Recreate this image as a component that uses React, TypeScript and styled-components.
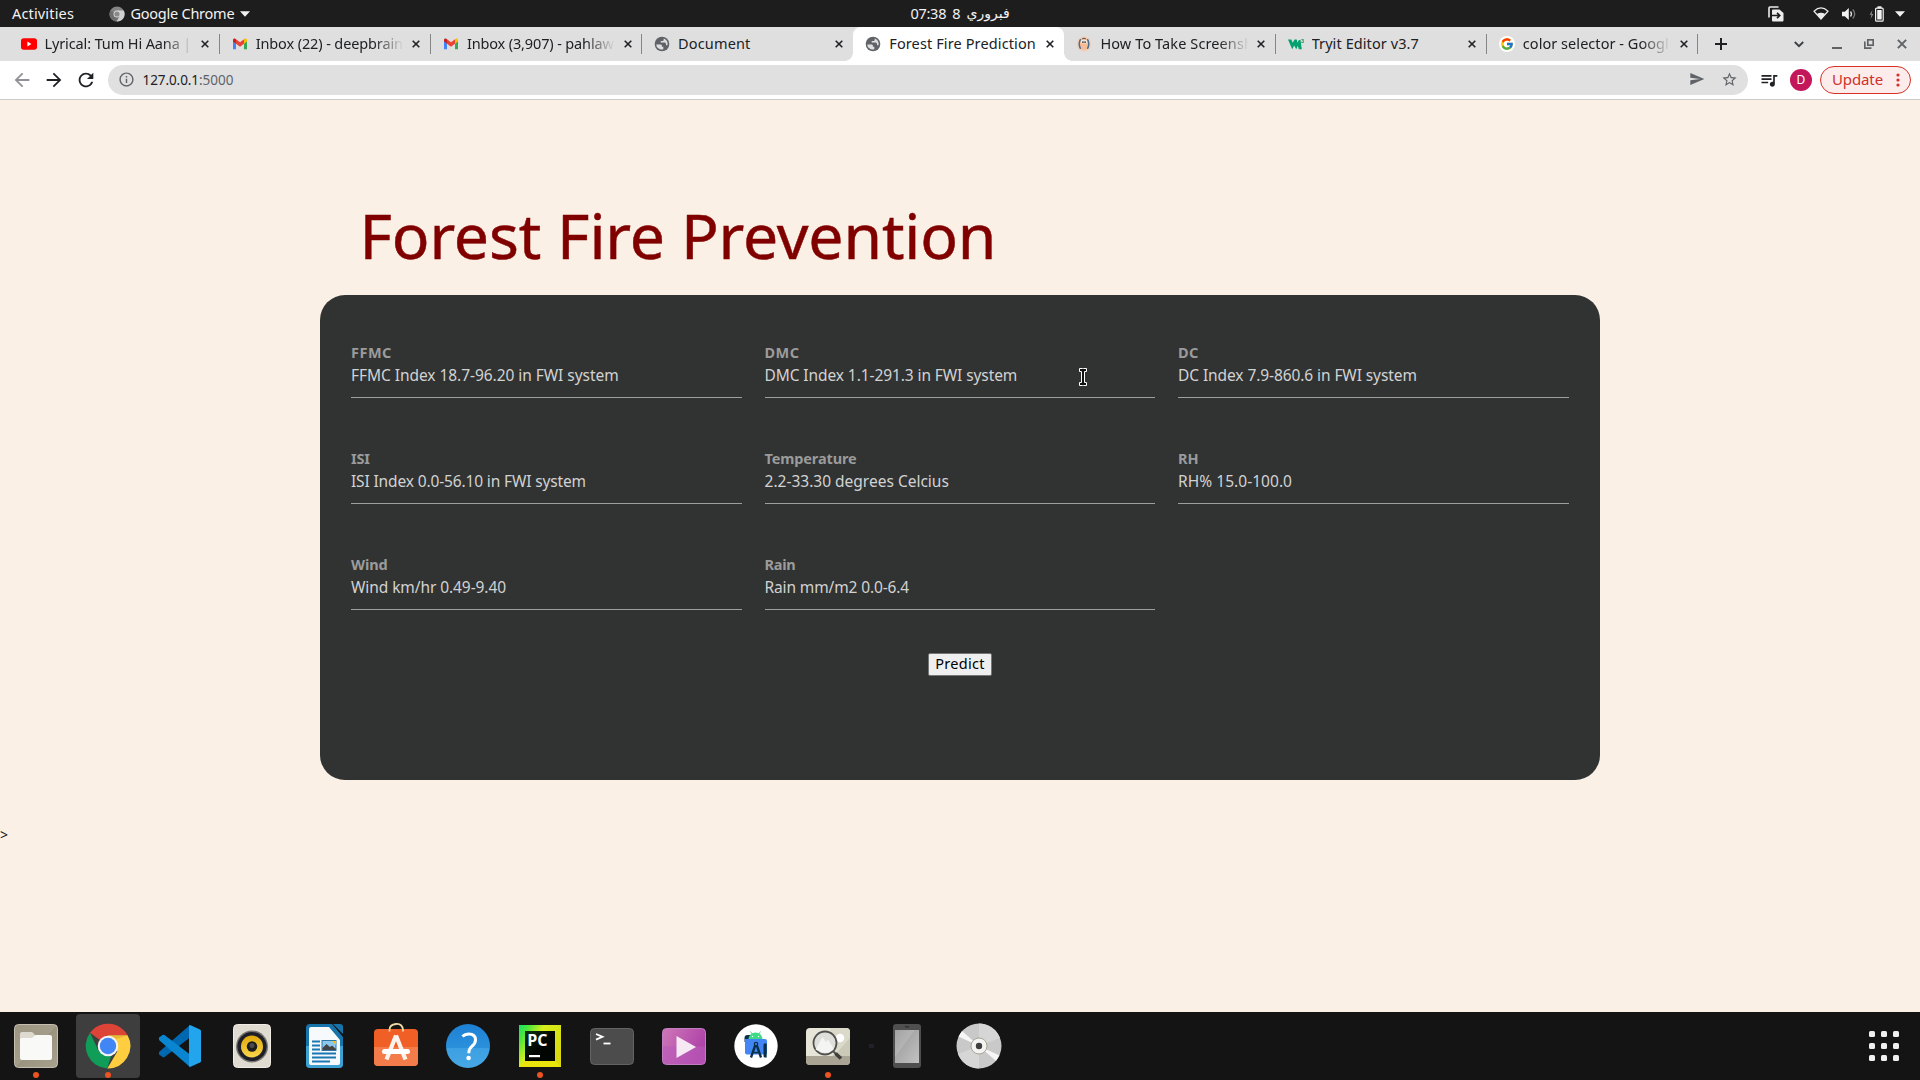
import React from 'react';
import styled, { createGlobalStyle } from 'styled-components';
import {
  MdArrowBack,
  MdArrowForward,
  MdRefresh,
  MdInfoOutline,
  MdSend,
  MdStarOutline,
  MdQueueMusic,
} from 'react-icons/md';
import { FcGoogle } from 'react-icons/fc';

const Global = createGlobalStyle`
  * { box-sizing: border-box; }
  html, body { margin: 0; padding: 0; overflow: hidden; }
  body { font-family: "Noto Sans", "Open Sans", sans-serif; }
  svg { display: block; flex: none; }
`;

const Desktop = styled.div`
  position: relative;
  width: 1920px;
  height: 1080px;
  display: flex;
  flex-direction: column;
  overflow: hidden;
`;

/* ---------- shared text ---------- */

const Text = styled.span<{ $track?: number }>`
  letter-spacing: ${(p) => p.$track ?? 0}px;
  white-space: pre;
`;

/* ---------- system bar ---------- */

const SystemBar = styled.header`
  height: 27px;
  flex: none;
  display: grid;
  grid-template-columns: 1fr auto 1fr;
  background: #1d1d1d;
  color: #f2f2f2;
  font-size: 14.5px;
  line-height: 27px;
`;

const SystemLeft = styled.div`
  display: flex;
  align-items: center;
  padding-left: 12px;
`;

const AppMenu = styled.div`
  display: flex;
  align-items: center;
  margin-left: 35px;
  gap: 5.5px;
`;

const Clock = styled.div`
  display: flex;
  align-items: center;
  gap: 6px;
`;

const ArabicText = styled.span`
  font-family: "DejaVu Sans", sans-serif;
  font-size: 14px;
`;

const Tray = styled.div`
  display: flex;
  align-items: center;
  justify-content: flex-end;
  padding-right: 15px;
`;

const TrayItem = styled.div<{ $before: number }>`
  margin-left: ${(p) => p.$before}px;
`;

/* ---------- browser tabs ---------- */

const TabStrip = styled.div`
  height: 34px;
  flex: none;
  display: flex;
  align-items: center;
  padding-left: 8.5px;
  background: #dfdfdf;
`;

const TabItem = styled.div<{ $active?: boolean; $divider?: boolean }>`
  position: relative;
  width: 211.2px;
  height: 34px;
  flex: none;
  display: flex;
  align-items: center;
  padding: 0 6px 0 12px;
  background: ${(p) => (p.$active ? '#fff' : 'transparent')};
  border-radius: 8px 8px 0 0;

  &::after {
    content: '';
    display: ${(p) => (p.$divider ? 'block' : 'none')};
    position: absolute;
    right: 0;
    top: 7px;
    width: 1px;
    height: 20px;
    background: #858585;
  }
`;

const Flare = styled.i<{ $side: 'left' | 'right' }>`
  position: absolute;
  bottom: 0;
  ${(p) => p.$side}: -8px;
  width: 8px;
  height: 8px;
  background: radial-gradient(
    circle at ${(p) => (p.$side === 'left' ? '0 0' : '100% 0')},
    transparent 7.5px,
    #fff 8px
  );
`;

const TabIcon = styled.div`
  width: 16px;
  height: 16px;
  flex: none;
  margin-right: 8px;
`;

const TabTitle = styled.div<{ $fade?: boolean; $track: number }>`
  flex: 1;
  min-width: 0;
  overflow: hidden;
  white-space: pre;
  color: #202124;
  font-size: 14.5px;
  line-height: 32px;
  height: 34px;
  letter-spacing: ${(p) => p.$track}px;
  mask-image: ${(p) =>
    p.$fade ? 'linear-gradient(to right, #000 calc(100% - 30px), transparent 100%)' : 'none'};
`;

const TabClose = styled.div`
  width: 17px;
  flex: none;
  display: flex;
  justify-content: center;
  margin-left: 4px;
`;

const NewTab = styled.div`
  margin-left: 17px;
  flex: 1;
`;

const WindowButtons = styled.div`
  display: flex;
  align-items: center;
  padding-right: 13px;
`;

/* ---------- toolbar ---------- */

const Toolbar = styled.div`
  height: 39px;
  flex: none;
  display: flex;
  align-items: center;
  padding: 0 9px 1px 11px;
  background: #fff;
  border-bottom: 1px solid #cbcbcb;
`;

const NavButtons = styled.div`
  display: flex;
  gap: 10px;
  color: #202124;
`;

const Omnibox = styled.div`
  flex: 1;
  height: 30px;
  display: flex;
  align-items: center;
  margin-left: 11px;
  padding: 0 10px 0 10px;
  border-radius: 15px;
  background: #e0e0e0;
  color: #5f6368;
`;

const Address = styled.div`
  flex: 1;
  margin-left: 7.5px;
  font-size: 13.5px;
  line-height: 30px;
`;

const Host = styled(Text)`
  color: #202124;
`;

const OmniActions = styled.div`
  display: flex;
  gap: 16px;
`;

const Avatar = styled.div`
  width: 22px;
  height: 22px;
  margin: 0 8px 0 11px;
  border-radius: 50%;
  background: #c2185b;
  color: #fff;
  font-size: 12px;
  line-height: 22px;
  text-align: center;
`;

const UpdateButton = styled.div`
  width: 91px;
  height: 28px;
  display: flex;
  align-items: center;
  justify-content: space-between;
  padding: 0 10px 0 11px;
  border: 1px solid #d93025;
  border-radius: 14px;
  background: #fcecec;
  color: #d2302a;
  font-size: 15px;
  line-height: 24px;
`;

const UpdateLabel = styled(Text)`
  padding-bottom: 2px;
`;

/* ---------- web page ---------- */

const Page = styled.main`
  height: 912px;
  flex: none;
  padding-top: 95px;
  background: #faf0e6;
`;

const Title = styled.h1`
  margin: 0 0 20px 359.5px;
  color: #800000;
  font-size: 62.5px;
  font-weight: 400;
  line-height: 80px;
  letter-spacing: -0.17px;
  -webkit-text-stroke: 0.5px #800000;
`;

const Card = styled.section`
  width: 1280px;
  height: 485px;
  margin: 0 auto;
  padding: 47px 31px 0;
  border-radius: 25px;
  background: #313332;
`;

const Fields = styled.div`
  display: grid;
  grid-template-columns: repeat(3, 1fr);
  column-gap: 22.6px;
  row-gap: 50px;
`;

const Field = styled.div`
  height: 56px;
  display: flex;
  flex-direction: column;
  border-bottom: 1px solid #9e9e9e;
`;

const FieldLabel = styled.label<{ $track: number }>`
  height: 22px;
  color: #9b9b9b;
  font-size: 14.5px;
  font-weight: 700;
  line-height: 20px;
  letter-spacing: ${(p) => p.$track}px;
`;

const FieldHint = styled.div<{ $track: number }>`
  color: #d2d2d2;
  font-size: 15.5px;
  line-height: 22px;
  letter-spacing: ${(p) => p.$track}px;
`;

const PredictButton = styled.button`
  display: block;
  width: 64px;
  height: 23px;
  margin: 43px auto 0;
  padding: 0 0 2px;
  border: 1px solid #767676;
  border-radius: 2px;
  background: #efefef;
  color: #000;
  font-family: inherit;
  font-size: 14.5px;
  line-height: 19px;
  letter-spacing: 0.29px;
`;

const Stray = styled.div`
  margin-top: 45px;
  color: #111;
  font-size: 14px;
  line-height: 20px;
`;

const Pointer = styled.div`
  position: absolute;
  left: 1079px;
  top: 368px;
`;

/* ---------- dock ---------- */

const DockBar = styled.footer`
  height: 68px;
  flex: none;
  display: flex;
  align-items: center;
  background: #141414;
`;

const DockItem = styled.div<{ $focused?: boolean; $running?: boolean }>`
  position: relative;
  width: 64px;
  height: 64px;
  margin: 0 4px;
  display: flex;
  align-items: center;
  justify-content: center;
  border-radius: 4px;
  background: ${(p) => (p.$focused ? '#3e3e3e' : 'transparent')};

  &::after {
    content: '';
    display: ${(p) => (p.$running ? 'block' : 'none')};
    position: absolute;
    left: 29px;
    bottom: 0;
    width: 6px;
    height: 6px;
    border-radius: 50%;
    background: #e95420;
  }
`;

const DockDivider = styled.div`
  width: 5px;
  height: 4px;
  margin: 0 -3px 0 5px;
  background: #1f212c;
`;

const LauncherGrid = styled.div`
  display: grid;
  grid-template-columns: repeat(3, 6px);
  gap: 6px;
  margin: 0 21px 0 auto;
`;

const LauncherDot = styled.i`
  height: 6px;
  border-radius: 1.5px;
  background: #f0f0f0;
`;

/* ---------- favicons and small glyphs ---------- */

const YoutubeIcon = () => (
  <svg width="16" height="16" viewBox="0 0 16 16">
    <rect x="0" y="2.2" width="16" height="11.6" rx="2.8" fill="#ff0000" />
    <path d="M6.4 5.6v4.8L10.4 8z" fill="#fff" />
  </svg>
);

const GmailIcon = () => (
  <svg width="16" height="16" viewBox="0 0 16 16">
    <path d="M1 4v9.2h3V7.4z" fill="#4285f4" />
    <path d="M12 7.4v5.8h3V4z" fill="#34a853" />
    <path d="M1 3.8c0-1.2 1.4-1.8 2.3-1.1L4 3.3v4.4L1 5.4z" fill="#c5221f" />
    <path d="M4 3.3l4 3 4-3v4.4l-4 3-4-3z" fill="#ea4335" />
    <path d="M12 3.3l.7-.6c.9-.7 2.3-.1 2.3 1.1v1.6l-3 2.3z" fill="#fbbc04" />
  </svg>
);

const GlobeIcon = () => (
  <svg width="16" height="16" viewBox="0 0 16 16">
    <circle cx="8" cy="8" r="7.3" fill="#5f6368" />
    <path
      d="M2.2 8.4h4.2c.8 0 1.5.6 1.5 1.4v.9h1.4v2.6a6 6 0 0 1-1.5.3A5.7 5.7 0 0 1 2.2 8.4z"
      fill="#dfdfdf"
    />
    <path
      d="M9.7 2.5v1.2c0 .8-.6 1.4-1.4 1.4H6.7v1.5h3.8c.9 0 1.5.7 1.5 1.4v1.2h1.5a5.7 5.7 0 0 0-3.8-6.7z"
      fill="#dfdfdf"
    />
  </svg>
);

const FaceIcon = () => (
  <svg width="16" height="16" viewBox="0 0 16 16">
    <ellipse cx="8" cy="8" rx="7.4" ry="7.8" fill="#f0d3bf" />
    <ellipse cx="8" cy="8" rx="5.4" ry="6.2" fill="#f7bd96" />
    <path d="M4.6 3.2Q1.800 8 4.600 12.800M11.400 3.200Q14.200 8 11.400 12.800" fill="none" stroke="#4a6f93" strokeWidth="1.500" />
    <ellipse cx="6.500" cy="5.700" rx="1.500" ry="1.900" fill="#f4f1ea" />
    <ellipse cx="9.500" cy="5.700" rx="1.500" ry="1.900" fill="#f4f1ea" />
    <circle cx="6.900" cy="6.100" r=".9" fill="#333" />
    <circle cx="9.100" cy="6.100" r=".9" fill="#333" />
    <path d="M6 2.900q2-1.400 4 0" stroke="#555" fill="none" />
  </svg>
);

const W3Icon = () => (
  <svg width="16" height="16" viewBox="0 0 16 16">
    <path d="M0 3.500h3.300l1.500 3.200L6.500 3.500h2.200l.8 3.200L10.800 4h1.700l1.300 9.200h-3l-.9-3.400-1.700 3.400-2-3.600-2 3.600z" fill="#04a06e" />
    <text x="12.700" y="6.600" fontSize="6" fontWeight="700" fontFamily="Liberation Sans, sans-serif" fill="#04a06e">
      3
    </text>
  </svg>
);

const GoogleFavicon = () => (
  <svg width="16" height="16" viewBox="0 0 16 16">
    <circle cx="8" cy="8" r="8" fill="#fff" />
    <svg x="1" y="1" width="14" height="14" viewBox="0 0 14 14">
      <FcGoogle size={14} />
    </svg>
  </svg>
);

const CloseGlyph = ({ size = 8, color = '#202124' }: { size?: number; color?: string }) => (
  <svg width={size} height={size} viewBox="0 0 8 8">
    <path d="M.7.7l6.6 6.6M7.3.7L.7 7.3" stroke={color} strokeWidth="1.6" />
  </svg>
);

const GreyChrome = () => (
  <svg width="16" height="16" viewBox="0 0 16 16">
    <circle cx="8" cy="8" r="7.6" fill="#858585" />
    <path d="M8 8L1.6 4.2A7.6 7.6 0 0 0 7 15.5l3-5.5z" fill="#6d6d6d" />
    <path d="M8 4.6h6.8a7.6 7.6 0 0 1-7.2 11L11 10z" fill="#d0d0d0" />
    <circle cx="8" cy="8" r="3.5" fill="#d8d8d8" />
    <circle cx="8" cy="8" r="2.6" fill="#8a8a8a" />
  </svg>
);

const DownTriangle = ({ width }: { width: number }) => (
  <svg width={width} height="6" viewBox="0 0 10 6" preserveAspectRatio="none">
    <path d="M0 .3h10L5 5.7z" fill="#f2f2f2" />
  </svg>
);

const ShareScreenIcon = () => (
  <svg width="16" height="16" viewBox="0 0 16 16">
    <path d="M1 11.5V2q0-1 1-1h8.5" fill="none" stroke="#ececec" strokeWidth="1.6" />
    <path d="M5 3.5h6.5l4 3.5v7.5q0 1-1 1H5q-1 0-1-1v-10q0-1 1-1z" fill="#ececec" />
    <path d="M4 9.500h7M9 6.800l2.800 2.700L9 12.200" fill="none" stroke="#1d1d1d" strokeWidth="1.600" />
  </svg>
);

const WifiIcon = () => (
  <svg width="16" height="13" viewBox="0 0 16 13">
    <path d="M1 4.2Q8-2.4 15 4.2L8 12z" fill="none" stroke="#ececec" strokeWidth="1.2" />
    <path d="M3.8 7Q8 4.4 12.2 7L8 12.2z" fill="#ececec" />
  </svg>
);

const VolumeIcon = () => (
  <svg width="16" height="12" viewBox="0 0 16 12">
    <path d="M0 3.7h2.8L6.800 0v12L2.800 8.300H0z" fill="#f2f2f2" />
    <path d="M8.500 3.500q2 2.500 0 5" fill="none" stroke="#e0e0e0" strokeWidth="1.300" />
    <path d="M10.800 1.500q3.800 4.500 0 9" fill="none" stroke="#777" strokeWidth="1.300" />
  </svg>
);

const BatteryIcon = () => (
  <svg width="15" height="16" viewBox="0 0 15 16">
    <path d="M3.400 4L.6 8.800h1.800L1.600 13l2.800-5H2.700z" fill="#8a8a8a" />
    <rect x="6.600" y="2.200" width="7.600" height="13" rx="1" fill="none" stroke="#f2f2f2" strokeWidth="1.200" />
    <rect x="8.500" y="0.300" width="4" height="2" fill="#f2f2f2" />
    <rect x="8.200" y="4" width="4.500" height="9.500" fill="#f2f2f2" />
  </svg>
);

const PlusIcon = () => (
  <svg width="12" height="12" viewBox="0 0 12 12">
    <path d="M6 0v12M0 6h12" stroke="#202124" strokeWidth="2" />
  </svg>
);

const ChevronIcon = () => (
  <svg width="10" height="7" viewBox="0 0 10 7">
    <path d="M.8 1l4.2 4.2L9.2 1" fill="none" stroke="#3c4043" strokeWidth="1.900" />
  </svg>
);

const MinimizeIcon = () => (
  <svg width="10" height="10" viewBox="0 0 10 10">
    <path d="M0 9h10" stroke="#5f6368" strokeWidth="2" />
  </svg>
);

const RestoreIcon = () => (
  <svg width="10" height="10" viewBox="0 0 10 10">
    <rect x="3.800" y=".8" width="5.400" height="5.400" fill="none" stroke="#5f6368" strokeWidth="1.700" />
    <path d="M.8 2.500v6.700h6.700" fill="none" stroke="#5f6368" strokeWidth="1.700" />
  </svg>
);

const KebabIcon = () => (
  <svg width="4" height="14" viewBox="0 0 4 14">
    <circle cx="2" cy="2" r="1.600" fill="#d2302a" />
    <circle cx="2" cy="7" r="1.600" fill="#d2302a" />
    <circle cx="2" cy="12" r="1.600" fill="#d2302a" />
  </svg>
);

const IBeam = () => (
  <svg width="8" height="18" viewBox="0 0 8 18">
    <path
      d="M.5.5h3l.5.500.5-.500h3v3H5.500v11h2v3h-3l-.5-.500-.5.500h-3v-3h2v-11h-2z"
      fill="#111"
      stroke="#fff"
      strokeWidth="1"
    />
  </svg>
);

/* ---------- dock icons ---------- */

const FilesIcon = () => (
  <svg width="44" height="44" viewBox="0 0 44 44">
    <defs>
      <linearGradient id="files" x1="0" y1="0" x2="1" y2="1">
        <stop offset="0" stopColor="#9c9582" />
        <stop offset=".5" stopColor="#a49d8a" />
        <stop offset=".5" stopColor="#9a9380" />
        <stop offset="1" stopColor="#a8a18e" />
      </linearGradient>
    </defs>
    <rect x=".5" y=".5" width="43" height="43" rx="4" fill="url(#files)" stroke="#c3beb0" />
    <path d="M6 10q0-2 2-2h9q1.500 0 2.500 1.300L21.500 12H36v8H6z" fill="#dedad0" />
    <path d="M6 16q0-2 2-2h10l3.500-3H36q2 0 2 2v21q0 2-2 2H8q-2 0-2-2z" fill="#f9f9f8" />
  </svg>
);

const ChromeIcon = () => (
  <svg width="46" height="46" viewBox="0 0 46 46">
    <path d="M23 23L5 9.800A22.400 22.400 0 0 1 42.600 12.300H23z" fill="#db4437" />
    <path d="M42.600 12.300A22.400 22.400 0 0 1 22.300 45.400L32.300 28.400 23 12.300z" fill="#ffcd40" />
    <path d="M5 9.800L13.800 28.300 26 33l-3.700 12.400A22.400 22.400 0 0 1 5 9.800z" fill="#0f9d58" />
    <path d="M23 12.300h19.600l-12 4z" fill="#d9a52c" opacity=".5" />
    <circle cx="23" cy="23" r="10.300" fill="#f4f4f4" />
    <circle cx="23" cy="23" r="8.200" fill="#4285f4" />
  </svg>
);

const VsCodeIcon = () => (
  <svg width="42" height="42" viewBox="0 0 42 42">
    <path d="M31 0L0 27v2.500L3.500 32q1 .6 2 0L31 12.500z" fill="#0068b1" />
    <path d="M31 42L0 15v-2.500L3.500 10q1-.6 2 0L31 29.500z" fill="#0a86d1" />
    <path d="M31 0L41 4.500q1 .5 1 1.500v30q0 1-1 1.500L31 42l-1-.8V.8z" fill="#23a5ee" />
  </svg>
);

const RhythmboxIcon = () => (
  <svg width="38" height="44" viewBox="0 0 38 44">
    <defs>
      <linearGradient id="cone" x1="0" y1="0" x2="0" y2="1">
        <stop offset="0" stopColor="#e0a80c" />
        <stop offset="1" stopColor="#f9d64a" />
      </linearGradient>
    </defs>
    <rect x=".5" y=".5" width="37" height="43" rx="4" fill="#e0dbd0" stroke="#f0ede6" />
    <circle cx="19" cy="22.500" r="16" fill="#77756f" />
    <circle cx="19" cy="22.500" r="14.600" fill="#1e1e28" />
    <circle cx="19" cy="22.500" r="11" fill="url(#cone)" />
    <circle cx="19" cy="22.500" r="5.200" fill="#1b1b1b" />
    <circle cx="19" cy="21.500" r="2.500" fill="#4a4a4a" />
  </svg>
);

const WriterIcon = () => (
  <svg width="37" height="44" viewBox="0 0 37 44">
    <path d="M4 0h22l11 13v27q0 4-4 4H4q-4 0-4-4V4q0-4 4-4z" fill="#1774ab" />
    <path d="M0 22h37v18q0 4-4 4H4q-4 0-4-4z" fill="#3d9fd2" />
    <path d="M27 0h7q3 0 3 3v7z" fill="#1774ab" />
    <path d="M5 3h18l11 13v23q0 2-2 2H5q-2 0-2-2V5q0-2 2-2z" fill="#f7fafc" />
    <path d="M6 17.500h8M6 21.500h8M6 25.500h8M6 29.500h24M6 33.500h24M6 37.500h18" stroke="#1a77b2" strokeWidth="1.900" />
    <rect x="16" y="16.500" width="14" height="10" fill="#8cc8ec" stroke="#2a77a8" />
    <path d="M26 17h4v4z" fill="#f3c418" />
    <path d="M16.500 26v-2l4-4 3.500 3 2-1.500 4 3.500v1z" fill="#444" />
  </svg>
);

const SoftwareIcon = () => (
  <svg width="44" height="46" viewBox="0 -2 44 46">
    <rect y="4" width="44" height="37" rx="4" fill="#f05f25" />
    <path d="M0 22h44v15q0 4-4 4H4q-4 0-4-4z" fill="#f47c4a" />
    <path d="M15.500 6.500V5q0-5.500 6.500-6t7 6v1.500" fill="none" stroke="#eed9a8" strokeWidth="1.800" />
    <path d="M22 10.500L12.500 34.500M22 10.500l9.500 24" stroke="#fbf3ee" strokeWidth="4.200" />
    <rect x="8" y="24" width="28" height="5" rx="2.500" fill="#fff" />
  </svg>
);

const HelpIcon = () => (
  <svg width="44" height="44" viewBox="0 0 44 44">
    <defs>
      <linearGradient id="help" x1="0" y1="0" x2="0" y2="1">
        <stop offset="0" stopColor="#1d80d4" />
        <stop offset=".54" stopColor="#2b90dc" />
        <stop offset=".54" stopColor="#3c9fe2" />
        <stop offset="1" stopColor="#48a8e6" />
      </linearGradient>
    </defs>
    <circle cx="22" cy="22" r="22" fill="url(#help)" />
    <path
      d="M16.500 12.500Q19 10 23 10q6.500 0 6.500 6 0 3.500-3.600 6.300-3 2.500-3 6v1"
      fill="none"
      stroke="#fff"
      strokeWidth="3"
    />
    <circle cx="22.600" cy="34" r="2.300" fill="#fff" />
  </svg>
);

const PyCharmIcon = () => (
  <svg width="42" height="42" viewBox="0 0 42 42">
    <defs>
      <linearGradient id="pyc" x1="0" y1="0" x2="1" y2=".6">
        <stop offset="0" stopColor="#16e26a" />
        <stop offset=".18" stopColor="#4be83a" />
        <stop offset=".45" stopColor="#d6ef1c" />
        <stop offset="1" stopColor="#d9d90e" />
      </linearGradient>
      <linearGradient id="pycin" x1="0" y1="0" x2="1" y2="1">
        <stop offset="0" stopColor="#0c3413" />
        <stop offset=".5" stopColor="#020602" />
      </linearGradient>
    </defs>
    <rect width="42" height="42" fill="url(#pyc)" />
    <path d="M0 42L6 36h30l6 6z" fill="#e9e40c" />
    <rect x="6" y="6" width="30" height="30" fill="url(#pycin)" />
    <text x="8.300" y="21" fontSize="16" fontWeight="700" fontFamily="Open Sans, sans-serif" fill="#fff">
      PC
    </text>
    <rect x="10" y="30" width="11" height="2.200" fill="#fff" />
  </svg>
);

const TerminalIcon = () => (
  <svg width="44" height="37" viewBox="0 0 44 37">
    <rect x=".5" y=".5" width="43" height="36" rx="4" fill="#4c4c4c" stroke="#636363" />
    <path d="M6 6l6.500 2.800L6 11.600" fill="none" stroke="#fff" strokeWidth="1.800" />
    <path d="M13.500 15.500h7" stroke="#fff" strokeWidth="1.800" />
  </svg>
);

const VideosIcon = () => (
  <svg width="44" height="37" viewBox="0 0 44 37">
    <defs>
      <linearGradient id="vid" x1="0" y1="0" x2="1" y2=".4">
        <stop offset="0" stopColor="#cf78b8" />
        <stop offset="1" stopColor="#ae42a9" />
      </linearGradient>
    </defs>
    <rect x=".5" y=".5" width="43" height="36" rx="4" fill="url(#vid)" stroke="#c27cc0" />
    <path d="M1 18.500h42V32q0 4-4 4H5q-4 0-4-4z" fill="#b95bb9" opacity=".6" />
    <path d="M14.500 8v22L34 19z" fill="#f7e9f3" />
  </svg>
);

const AndroidStudioIcon = () => (
  <svg width="44" height="44" viewBox="0 0 44 44">
    <circle cx="22" cy="22" r="21.700" fill="#fff" />
    <path d="M10.500 14q0-3 3-3H16v7h-5.500z" fill="#0a3047" />
    <path d="M14.500 15.500a7 7 0 0 1 14 0z" fill="#3ddc84" />
    <path d="M16.500 7.500l2 3M26.500 7.500l-2 3" stroke="#3ddc84" strokeWidth="1" />
    <circle cx="18.500" cy="12.500" r=".7" fill="#fff" />
    <circle cx="24.500" cy="12.500" r=".7" fill="#fff" />
    <path d="M11 15h20q2 0 2 2v12q0 1.500-1.500 1.500H13q-2 0-2-2z" fill="#4285f4" />
    <path d="M21.500 20.500L17 33.500M22.500 20.500L27 33.500" stroke="#0a3047" strokeWidth="2.300" />
    <circle cx="22" cy="20" r="1.700" fill="#4285f4" stroke="#0a3047" strokeWidth="1.200" />
    <path d="M18.500 28q3.500 1.500 7 0" fill="none" stroke="#0a3047" strokeWidth="1.500" />
    <path d="M30 19.500h2.700v14H31q-1.500 0-1.500-1.500V21z" fill="#0a3047" />
  </svg>
);

const ImageViewerIcon = () => (
  <svg width="44" height="37" viewBox="0 0 44 37">
    <rect width="44" height="37" rx="4" fill="#e6e5d8" />
    <path d="M26 28L44 8v20z" fill="#cbcab8" />
    <path d="M24 0h16q4 0 4 4v6L28 28z" fill="#dad9ca" />
    <path d="M0 28h44v5q0 4-4 4H4q-4 0-4-4z" fill="#a9a493" />
    <circle cx="34" cy="10" r="4.300" fill="#fff" />
    <circle cx="19" cy="15" r="11.500" fill="#dededa" stroke="#51504d" strokeWidth="1.800" />
    <path d="M9.500 21.500L16.500 9l3.500 5 2-2.500 6 9.500q-7.500 7-18.500.5z" fill="#f4f4f2" />
    <path d="M27.500 23.500l2.500 2.500" stroke="#51504d" strokeWidth="2" />
    <path d="M29.500 25.500l5.500 5" stroke="#3f3e3c" strokeWidth="3.600" />
  </svg>
);

const PhoneIcon = () => (
  <svg width="28" height="44" viewBox="0 0 28 44">
    <defs>
      <linearGradient id="screen" x1="0" y1="0" x2="1" y2="1">
        <stop offset="0" stopColor="#a2a2a2" />
        <stop offset=".4" stopColor="#b4b4b4" />
        <stop offset=".42" stopColor="#a9a9a9" />
        <stop offset="1" stopColor="#c2c2c2" />
      </linearGradient>
    </defs>
    <rect width="28" height="44" rx="3" fill="#4f4f4f" />
    <rect x="2" y="6" width="24" height="33" fill="url(#screen)" />
    <path d="M12 2.800h4" stroke="#2a2a2a" strokeWidth="1.200" />
  </svg>
);

const DiscIcon = () => (
  <svg width="46" height="46" viewBox="0 0 46 46">
    <circle cx="23" cy="23" r="22.500" fill="#c9c9c9" />
    <path d="M23 23L23 .5A22.500 22.500 0 0 1 44 15z" fill="#d6d6d6" />
    <path d="M23 23L23 45.500A22.500 22.500 0 0 1 2 31z" fill="#d6d6d6" />
    <path d="M23 23L2.500 13.500 6 8z" fill="#f6f6f6" />
    <path d="M23 23L43.500 32.500 40 38z" fill="#f6f6f6" />
    <circle cx="23" cy="23" r="8" fill="#f3f3f1" stroke="#a29c8a" strokeWidth=".9" />
    <circle cx="23" cy="23" r="3.200" fill="#3f3f3f" />
  </svg>
);

/* ---------- data ---------- */

const tabs = [
  { title: 'Lyrical: Tum Hi Aana | ', icon: YoutubeIcon, track: -0.12, fade: true, divider: true },
  { title: 'Inbox (22) - deepbrain', icon: GmailIcon, track: -0.12, fade: true, divider: true },
  { title: 'Inbox (3,907) - pahlaw', icon: GmailIcon, track: -0.14, fade: true, divider: true },
  { title: 'Document', icon: GlobeIcon, track: 0.15 },
  { title: 'Forest Fire Prediction', icon: GlobeIcon, track: 0.12, active: true },
  { title: 'How To Take Screensh', icon: FaceIcon, track: 0.1, fade: true, divider: true },
  { title: 'Tryit Editor v3.7', icon: W3Icon, track: 0.09, divider: true },
  { title: 'color selector - Google', icon: GoogleFavicon, track: 0.05, fade: true, divider: true },
];

const fields = [
  { label: 'FFMC', labelTrack: 0.5, hint: 'FFMC Index 18.7-96.20 in FWI system', hintTrack: -0.05 },
  { label: 'DMC', labelTrack: 0.45, hint: 'DMC Index 1.1-291.3 in FWI system', hintTrack: -0.09 },
  { label: 'DC', labelTrack: 0.3, hint: 'DC Index 7.9-860.6 in FWI system', hintTrack: -0.09 },
  { label: 'ISI', labelTrack: -0.2, hint: 'ISI Index 0.0-56.10 in FWI system', hintTrack: -0.14 },
  { label: 'Temperature', labelTrack: -0.13, hint: '2.2-33.30 degrees Celcius', hintTrack: 0 },
  { label: 'RH', labelTrack: 0, hint: 'RH% 15.0-100.0', hintTrack: 0.04 },
  { label: 'Wind', labelTrack: -0.11, hint: 'Wind km/hr 0.49-9.40', hintTrack: -0.08 },
  { label: 'Rain', labelTrack: -0.24, hint: 'Rain mm/m2 0.0-6.4', hintTrack: -0.13 },
];

const launchers = [
  { id: 'files', icon: FilesIcon, running: true },
  { id: 'chrome', icon: ChromeIcon, running: true, focused: true },
  { id: 'vscode', icon: VsCodeIcon },
  { id: 'rhythmbox', icon: RhythmboxIcon },
  { id: 'writer', icon: WriterIcon },
  { id: 'software', icon: SoftwareIcon },
  { id: 'help', icon: HelpIcon },
  { id: 'pycharm', icon: PyCharmIcon, running: true },
  { id: 'terminal', icon: TerminalIcon },
  { id: 'videos', icon: VideosIcon },
  { id: 'studio', icon: AndroidStudioIcon },
  { id: 'viewer', icon: ImageViewerIcon, running: true },
];

export default function App() {
  return (
    <Desktop>
      <Global />
      <SystemBar>
        <SystemLeft>
          <Text $track={0.16}>Activities</Text>
          <AppMenu>
            <GreyChrome />
            <Text $track={-0.25}>Google Chrome</Text>
            <DownTriangle width={10} />
          </AppMenu>
        </SystemLeft>
        <Clock>
          <Text $track={-0.25}>07:38</Text>
          <span>8</span>
          <ArabicText dir="rtl">فبروري</ArabicText>
        </Clock>
        <Tray>
          <TrayItem $before={0}><ShareScreenIcon /></TrayItem>
          <TrayItem $before={29}><WifiIcon /></TrayItem>
          <TrayItem $before={13}><VolumeIcon /></TrayItem>
          <TrayItem $before={11}><BatteryIcon /></TrayItem>
          <TrayItem $before={11}><DownTriangle width={10} /></TrayItem>
        </Tray>
      </SystemBar>

      <TabStrip>
        {tabs.map(({ title, icon: Icon, track, fade, divider, active }) => (
          <TabItem key={title} $active={active} $divider={divider}>
            {active && <Flare $side="left" />}
            {active && <Flare $side="right" />}
            <TabIcon><Icon /></TabIcon>
            <TabTitle $track={track} $fade={fade}>{title}</TabTitle>
            <TabClose><CloseGlyph /></TabClose>
          </TabItem>
        ))}
        <NewTab><PlusIcon /></NewTab>
        <WindowButtons>
          <TrayItem $before={0}><ChevronIcon /></TrayItem>
          <TrayItem $before={28}><MinimizeIcon /></TrayItem>
          <TrayItem $before={22}><RestoreIcon /></TrayItem>
          <TrayItem $before={23}><CloseGlyph size={10} color="#5f6368" /></TrayItem>
        </WindowButtons>
      </TabStrip>

      <Toolbar>
        <NavButtons>
          <MdArrowBack size={22} color="#8f9194" />
          <MdArrowForward size={22} />
          <MdRefresh size={22} />
        </NavButtons>
        <Omnibox>
          <MdInfoOutline size={17} />
          <Address>
            <Host $track={-0.08}>127.0.0.1</Host>
            <Text>:5000</Text>
          </Address>
          <OmniActions>
            <MdSend size={16} />
            <MdStarOutline size={17} />
          </OmniActions>
        </Omnibox>
        <TrayItem $before={11}><MdQueueMusic size={20} color="#202124" /></TrayItem>
        <Avatar>D</Avatar>
        <UpdateButton>
          <UpdateLabel $track={-0.12}>Update</UpdateLabel>
          <KebabIcon />
        </UpdateButton>
      </Toolbar>

      <Page>
        <Title>Forest Fire Prevention</Title>
        <Card>
          <Fields>
            {fields.map((f) => (
              <Field key={f.label}>
                <FieldLabel $track={f.labelTrack}>{f.label}</FieldLabel>
                <FieldHint $track={f.hintTrack}>{f.hint}</FieldHint>
              </Field>
            ))}
          </Fields>
          <PredictButton>Predict</PredictButton>
        </Card>
        <Stray>&gt;</Stray>
      </Page>

      <DockBar>
        {launchers.map(({ id, icon: Icon, running, focused }) => (
          <DockItem key={id} $running={running} $focused={focused}>
            <Icon />
          </DockItem>
        ))}
        <DockDivider />
        <DockItem><PhoneIcon /></DockItem>
        <DockItem><DiscIcon /></DockItem>
        <LauncherGrid>
          {Array.from({ length: 9 }, (_, i) => (
            <LauncherDot key={i} />
          ))}
        </LauncherGrid>
      </DockBar>

      <Pointer><IBeam /></Pointer>
    </Desktop>
  );
}
